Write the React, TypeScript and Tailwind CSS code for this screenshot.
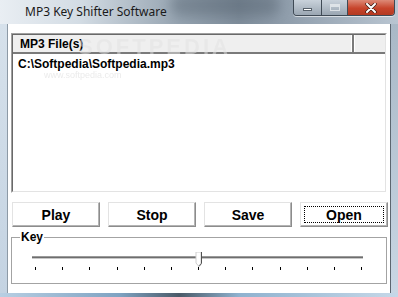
import React from 'react';

const ui = { fontFamily: '"Liberation Sans", Arial, sans-serif' };

const WinButton = ({ label, focused = false }: { label: string; focused?: boolean }) => (
  <button
    className="relative w-[88px] h-[25px] bg-white border border-t-[#e3e3e3] border-l-[#e3e3e3] border-b-[#8c8c8c] border-r-[#8c8c8c] shadow-[inset_-1px_-1px_0_#b4b4b4] text-[14px] font-bold text-black leading-none"
    style={ui}
  >
    {focused && <span className="absolute inset-[3px] border border-dotted border-black" />}
    <span className="relative">{label}</span>
  </button>
);

const ticks = Array.from({ length: 13 }, (_, i) => 3 + i * 27.17);

export default function App() {
  return (
    <div className="w-[398px] h-[297px] overflow-hidden bg-[#c6d5e4] flex flex-col">
      {/* title bar */}
      <div className="relative h-[24px] flex bg-[linear-gradient(90deg,#e9eef3_0%,#d3dce4_20%,#95a3b0_45%,#7f8d9b_60%,#98a6b4_78%,#b9c5d1_100%)] overflow-hidden">
        <div className="absolute left-[170px] top-[-6px] w-[110px] h-[22px] rounded-full bg-[#3d4a57] opacity-30 blur-[6px]" />
        <span
          className="relative flex-1 pl-[25px] pt-[3px] text-[12px] text-[#1a1a1a]"
          style={{ fontFamily: '"Noto Sans", "Open Sans", sans-serif' }}
        >
          MP3 Key Shifter Software
        </span>
        <div className="relative flex h-[16px] mr-[3px] rounded-b-[4px] border border-t-0 border-[#3f4a55] overflow-hidden shadow-[0_1px_0_rgba(255,255,255,0.6)]">
          <div className="w-[28px] flex items-center justify-center bg-[linear-gradient(#c9d2db,#9aa6b2)] border-r border-[#3f4a55]">
            <div className="w-[9px] h-[3px] mt-[4px] bg-white border border-[#56606a]" />
          </div>
          <div className="w-[26px] flex items-center justify-center bg-[linear-gradient(#c9d2db,#9aa6b2)] border-r border-[#3f4a55]">
            <div className="w-[10px] h-[7px] border border-[#e8ecef] opacity-80 shadow-[inset_0_2px_0_#e8ecef]" />
          </div>
          <div className="w-[46px] flex items-center justify-center bg-[linear-gradient(#dd8a77,#c7442b_55%,#b33a22)]">
            <svg width="12" height="10" viewBox="0 0 12 10">
              <path d="M2 1 L10 9 M10 1 L2 9" stroke="#3a1a14" strokeWidth="3.4" strokeLinecap="round" />
              <path d="M2 1 L10 9 M10 1 L2 9" stroke="#ffffff" strokeWidth="2" strokeLinecap="round" />
            </svg>
          </div>
        </div>
      </div>

      <div className="flex flex-1">
        <div className="w-[8px] border-r border-[#8d9aa6] bg-[linear-gradient(#d6e1eb,#c4d3e2)]" />

        {/* client area */}
        <div className="w-[382px] bg-white pl-[3px] pt-[9px]" style={ui}>
          {/* list view */}
          <div className="relative w-[376px] h-[160px] border border-[#a0a0a0] border-b-white border-r-white">
            <div className="h-full border border-[#696969] border-b-[#e3e3e3] border-r-[#e3e3e3] bg-white">
              <div className="flex h-[19px] bg-[#efefef] border-b-2 border-[#7a7a7a]">
                <div className="w-[341px] pl-[7px] flex items-center text-[12px] font-bold text-black border-r-2 border-r-[#7a7a7a] shadow-[inset_-1px_0_0_#ffffff]">
                  MP3 File(s)
                </div>
                <div className="flex-1 border-l border-white" />
              </div>
              <div className="pl-[5px] pt-[3px] text-[12px] font-bold text-black leading-[14px]">
                C:\Softpedia\Softpedia.mp3
              </div>
            </div>
            <span className="absolute left-[66px] top-[2px] text-[22px] font-bold tracking-[3px] text-[#e2e2e2] opacity-50 leading-none">
              SOFTPEDIA
            </span>
            <span className="absolute left-[32px] top-[37px] text-[9px] leading-none text-[#dddddd] opacity-60">
              www.softpedia.com
            </span>
          </div>

          {/* buttons */}
          <div className="flex gap-[8px] mt-[9px] ml-[1px]">
            <WinButton label="Play" />
            <WinButton label="Stop" />
            <WinButton label="Save" />
            <WinButton label="Open" focused />
          </div>

          {/* key group */}
          <fieldset className="w-[375px] h-[54px] mt-[3px] border border-[#a3a3a3] px-[20px]">
            <legend className="ml-[-12px] px-[1px] text-[12px] font-bold text-black leading-[14px]">Key</legend>
            <svg width="334" height="24" viewBox="0 0 334 24" className="mt-[8px]">
              <rect x="0" y="4" width="331" height="1" fill="#9a9a9a" />
              <rect x="0" y="5" width="331" height="1" fill="#6e6e6e" />
              <rect x="0" y="6" width="331" height="1" fill="#c8c8c8" />
              {ticks.map((x, i) => (
                <rect key={i} x={Math.round(x)} y="15" width="1" height="3" fill="#000" />
              ))}
              <path d="M164 0 H169 V11 L166.5 14 L164 11 Z" fill="#ffffff" stroke="#cfcfcf" strokeWidth="1" />
              <path d="M169.5 0 V11.5 L167 14.5" fill="none" stroke="#505050" strokeWidth="1" />
            </svg>
          </fieldset>
        </div>

        <div className="w-[8px] border-l border-[#5c6670] bg-[linear-gradient(#a9b8c6,#c9d7e4)]" />
      </div>
      <div className="h-[4px] bg-[linear-gradient(90deg,#b8cfe3,#7fa3c2_30%,#4a5a68_45%,#8fb2cf_60%,#c6d8e8)]" />
    </div>
  );
}
